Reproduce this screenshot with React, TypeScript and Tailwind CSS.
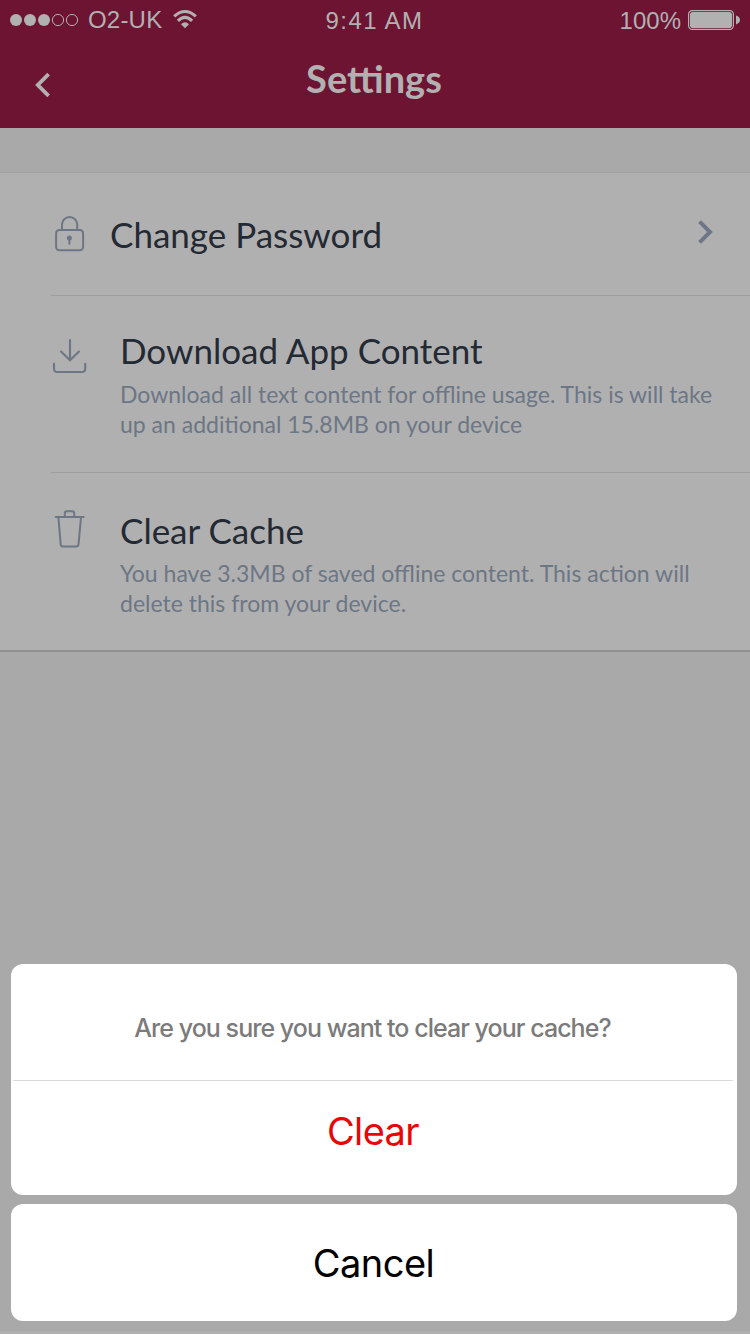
import type { ReactNode } from 'react';

function StatusBar() {
  return (
    <div className="flex h-[42px] items-start font-['Liberation_Sans',Arial,sans-serif] text-[24px] leading-[24px] text-[#b1b1b1]">
      <div className="flex w-[250px] items-start pl-[10px] pt-[8px]">
        <svg className="mt-[2px] h-5 w-[70px] fill-current" viewBox="0 0 70 20">
          <circle cx="6" cy="10" r="6" />
          <circle cx="20" cy="10" r="6" />
          <circle cx="34" cy="10" r="6" />
          <circle cx="48" cy="10" r="5.6" fill="none" stroke="currentColor" />
          <circle cx="62" cy="10" r="5.6" fill="none" stroke="currentColor" />
        </svg>
        <span className="ml-[8px] w-[80px] tracking-[0.2px]">O2-UK</span>
        <svg className="ml-[4px] mt-[1px] h-5 w-[26px]" viewBox="0 0 26 20" fill="none" stroke="currentColor" strokeWidth="3.1">
          <path d="M2.2 7.4Q13 -2.4 23.8 7.4" />
          <path d="M5.9 11.9Q13 4.9 20.1 11.9" />
          <path d="M9 15.2Q13 11.2 17 15.2L13 19.2Z" fill="currentColor" stroke="none" />
        </svg>
      </div>
      <div className="w-[249px] pt-[9px] text-center tracking-[1.4px]">9:41 AM</div>
      <div className="flex w-[251px] items-start justify-end pr-[9px] pt-[9px]">
        <span>100%</span>
        <svg className="ml-[7px] mt-[1px] h-5 w-[53px]" viewBox="0 0 53 20">
          <rect x="0.6" y="0.6" width="44.8" height="18.8" rx="3.6" fill="none" stroke="currentColor" strokeWidth="1.2" />
          <rect x="2" y="2" width="42" height="16" rx="2.8" fill="currentColor" />
          <path d="M48 5.6Q52 7 52 10Q52 13 48 14.4Z" fill="currentColor" />
        </svg>
      </div>
    </div>
  );
}

const LockIcon = () => (
  <svg className="h-10 w-10" viewBox="50 214 40 40" fill="none" stroke="currentColor" strokeWidth="2">
    <rect x="56.1" y="230.1" width="27" height="20.1" rx="3.2" />
    <path d="M62 230V224.6A7.6 7.6 0 0 1 77.2 224.6V230" />
    <circle cx="69.4" cy="238" r="2.5" fill="currentColor" stroke="none" />
    <path d="M69.4 238V244.6" />
  </svg>
);

const DownloadIcon = () => (
  <svg className="h-10 w-10" viewBox="50 336 40 40" fill="none" stroke="currentColor" strokeWidth="2.1" strokeLinecap="round">
    <path d="M70 340V360.2M61 351.6L70 360.2L79 351.6" />
    <path d="M54 363.8V368.4Q54 372 57.6 372H81.6Q85.2 372 85.2 368.4V363.8" />
  </svg>
);

const TrashIcon = () => (
  <svg className="h-10 w-10" viewBox="50 509 40 40" fill="none" stroke="currentColor" strokeWidth="2" strokeLinecap="round">
    <path d="M55.6 517H83.6" />
    <path d="M64.8 517V513.2Q64.8 511.2 66.8 511.2H72.2Q74.2 511.2 74.2 513.2V517" />
    <path d="M58.4 517.4L60.7 544.4Q60.9 546.4 62.9 546.4H76.3Q78.3 546.4 78.5 544.4L81 517.4" />
  </svg>
);

function Entry({ icon, title, children }: { icon: ReactNode; title: string; children: ReactNode }) {
  return (
    <>
      <div className="w-[70px] shrink-0 text-[#6d7685]">{icon}</div>
      <div>
        <h2 className="text-[35px] leading-[36px] text-[#232a34]">{title}</h2>
        <p className="text-[23px] leading-[30px] text-[#6d7685]">{children}</p>
      </div>
    </>
  );
}

export default function App() {
  return (
    <div className="relative flex h-[1334px] w-[750px] flex-col overflow-hidden bg-[#a9a9a9] font-['Lato',sans-serif]">
      <header className="h-[128px] bg-[#6d1433] text-[#b1b1b1]">
        <StatusBar />
        <div className="flex items-start">
          <button className="w-[100px] pl-[30px] pt-[28px]" aria-label="Back">
            <svg className="h-[30px] w-[24px]" viewBox="30 70 24 30" fill="none" stroke="currentColor" strokeWidth="3.8">
              <path d="M48.6 74.2L37.8 85L48.6 95.8" />
            </svg>
          </button>
          <h1 className="w-[548px] pt-[15px] text-center text-[38px] font-bold leading-[42px]">Settings</h1>
        </div>
      </header>

      <main className="mt-[44px] h-[480px] border-b-2 border-t border-b-[#8f9090] border-t-[#a0a0a0] bg-[#b0b0b0]">
        <section className="ml-[51px] flex h-[123px] border-b border-[#9e9e9e]">
          <div className="-ml-px mt-[41px] w-[60px] shrink-0 text-[#6d7685]">
            <LockIcon />
          </div>
          <h2 className="mt-[43px] grow text-[35px] leading-[36px] text-[#232a34]">Change Password</h2>
          <svg className="mr-[33px] mt-[44px] h-[30px] w-[22px] text-[#6d7685]" viewBox="695 217 22 30" fill="none" stroke="currentColor" strokeWidth="4">
            <path d="M699.6 221.6L710 232L699.6 242.4" />
          </svg>
        </section>
        <section className="ml-[51px] flex h-[177px] border-b border-[#9e9e9e]">
          <div className="-ml-px mt-[36px] flex [&_p]:mt-[11px]">
            <Entry icon={<div className="mt-[4px]"><DownloadIcon /></div>} title="Download App Content">
              Download all text content for offline usage. This is will take
              <br />
              up an additional 15.8MB on your device
            </Entry>
          </div>
        </section>
        <section className="ml-[50px] flex pt-[36px] [&_h2]:mt-[3px] [&_p]:mt-[10px]">
          <Entry icon={<TrashIcon />} title="Clear Cache">
            You have 3.3MB of saved offline content. This action will
            <br />
            delete this from your device.
          </Entry>
        </section>
      </main>

      <footer className="mt-auto h-[3px] bg-[#b0b0b0]" />

      <div className="absolute left-[11px] top-[964px] flex w-[726px] flex-col gap-[9px] text-center font-['Inter',sans-serif]">
        <div className="h-[231px] rounded-[12px] bg-white">
          <p className="h-[116px] pr-[3px] pt-[49px] text-[25px] font-medium leading-[30px] tracking-[-0.96px] text-[#7b7b7b]">
            Are you sure you want to clear your cache?
          </p>
          <div className="ml-[2px] mr-[4px] h-px bg-[#dadbdb]" />
          <button className="block w-full pr-[2px] pt-[27px] text-[38px] leading-[46px] tracking-[-0.6px] text-[#ea0507]">Clear</button>
        </div>
        <button className="h-[117px] rounded-[12px] bg-white pb-[35px] pr-px pt-[36px] text-[38px] leading-[46px] tracking-[-0.5px] text-black">
          Cancel
        </button>
      </div>
    </div>
  );
}
